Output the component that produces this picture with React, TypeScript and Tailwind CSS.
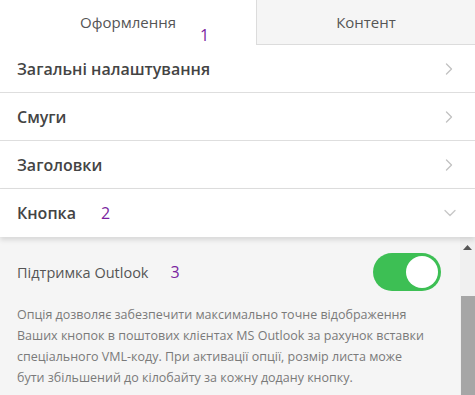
import { ChevronRight, ChevronDown } from "lucide-react";

const sections = ["Загальні налаштування", "Смуги", "Заголовки"];

export default function App() {
  return (
    <div
      className="w-[475px] h-[395px] overflow-hidden bg-white flex flex-col"
      style={{ fontFamily: '"Open Sans", "Noto Sans", sans-serif' }}
    >
      {/* Tabs */}
      <div className="flex h-[45px] shrink-0">
        <div className="w-[256px] flex items-center justify-center relative text-[15px] text-[#555]">
          Оформлення
          <span className="absolute left-[200px] top-[23px] text-[16px] text-[#7a1fa0]">1</span>
        </div>
        <div className="flex-1 flex items-center justify-center bg-[#f5f5f5] border-l border-b border-[#dcdcdc] text-[15px] text-[#555]">
          Контент
        </div>
      </div>

      {/* Sections */}
      {sections.map((title) => (
        <div
          key={title}
          className="h-[48px] shrink-0 flex items-center justify-between pl-[17px] pr-[16px] border-b border-[#dedede]"
        >
          <span className="text-[16px] font-semibold text-[#444]">{title}</span>
          <ChevronRight className="w-[20px] h-[20px] text-[#c2c2c2]" strokeWidth={1.6} />
        </div>
      ))}
      <div className="h-[48px] shrink-0 flex items-center justify-between pl-[17px] pr-[15px] relative z-10 shadow-[0_3px_5px_rgba(0,0,0,0.12)]">
        <span className="text-[16px] font-semibold text-[#444]">
          Кнопка
          <span className="ml-[25px] font-normal text-[#7a1fa0]">2</span>
        </span>
        <ChevronDown className="w-[20px] h-[20px] text-[#c8c8c8]" strokeWidth={1.6} />
      </div>

      {/* Expanded panel */}
      <div className="flex-1 flex bg-[#f5f5f5]">
        <div className="flex-1 pl-[17px] pr-[34px] pt-[1px]">
          <div className="flex items-center justify-between h-[66px] pt-[2px]">
            <span className="text-[14.5px] text-[#555]">
              Підтримка Outlook
              <span className="ml-[22px] text-[16px] text-[#7a1fa0]">3</span>
            </span>
            <div className="w-[68px] h-[38px] rounded-full bg-[#3dbf54] p-[3px] flex justify-end mr-[-15px]">
              <div className="w-[32px] h-[32px] rounded-full bg-white" />
            </div>
          </div>
          <p className="text-[12.5px] leading-[21px] text-[#7a7a7a]">
            Опція дозволяє забезпечити максимально точне відображення Ваших кнопок в поштових клієнтах MS Outlook за
            рахунок вставки спеціального VML-коду. При активації опції, розмір листа може бути збільшений до кілобайту
            за кожну додану кнопку.
          </p>
        </div>
        <div className="w-[15px] flex flex-col bg-[#f0f0f0]">
          <div className="h-[20px] shrink-0 flex items-center justify-center">
            <svg width="9" height="5" viewBox="0 0 9 5">
              <path d="M0 5 L4.5 0 L9 5 Z" fill="#555" />
            </svg>
          </div>
          <div className="h-[39px] shrink-0" />
          <div className="flex-1 bg-[#a6a6a6] ml-[1px]" />
        </div>
      </div>
    </div>
  );
}
